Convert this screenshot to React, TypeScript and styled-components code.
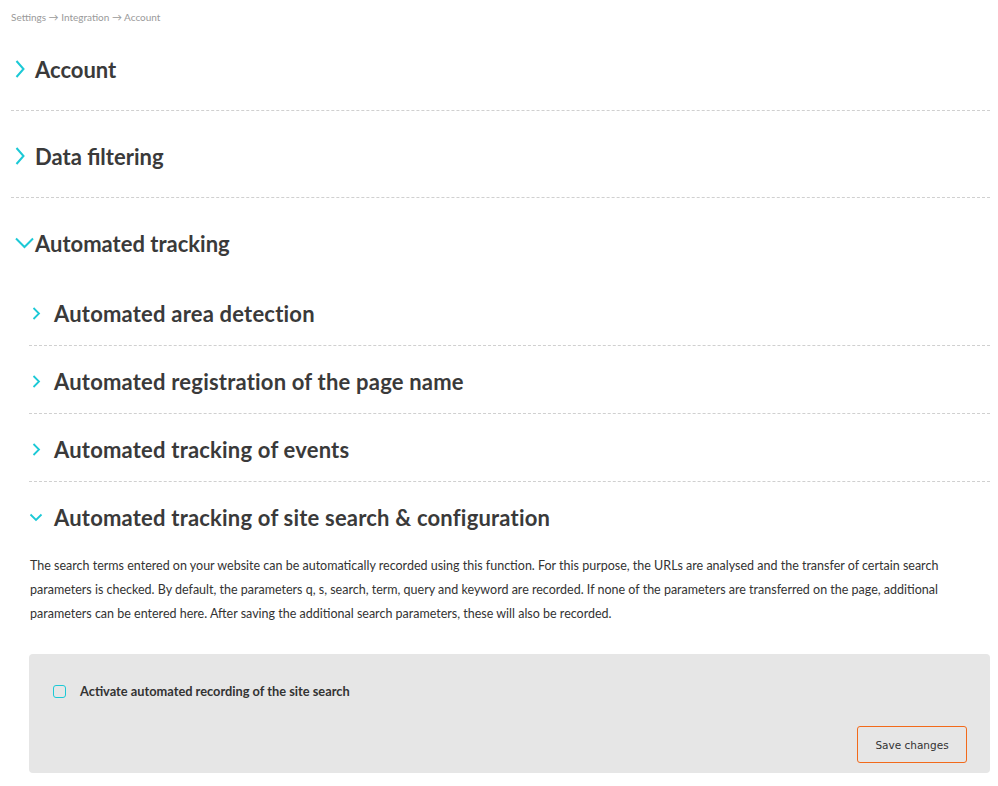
import { useState } from "react";
import styled, { createGlobalStyle, css } from "styled-components";

const GlobalStyle = createGlobalStyle`
  html, body {
    margin: 0;
    padding: 0;
    background: #ffffff;
    font-family: Lato, "Open Sans", sans-serif;
    color: #333333;
  }
`;

const Page = styled.div`
  padding: 10px 8px 12px 11px;
`;

const Breadcrumb = styled.div`
  font-size: 10px;
  color: #9a9a9a;
  line-height: 14px;
`;

const Section = styled.div<{ $last?: boolean }>`
  ${(p) =>
    !p.$last &&
    css`
      border-bottom: 1px dashed #d0d0d0;
    `}
`;

const Header = styled.div<{ $nested?: boolean }>`
  display: flex;
  align-items: center;
  cursor: pointer;
  ${(p) =>
    p.$nested
      ? css`
          height: 30px;
          padding: 20px 0 17px 0;
          gap: 14px;
          font-size: 22px;
          letter-spacing: 0.2px;
        `
      : css`
          height: 30px;
          padding: 30px 0 26px 0;
          font-size: 22px;
        `}
  font-weight: 700;
  color: #3a3a3a;
`;

const ChevronBox = styled.span<{ $nested?: boolean; $open?: boolean }>`
  display: inline-flex;
  align-items: center;
  justify-content: center;
  color: #1cc9d6;
  ${(p) =>
    p.$nested
      ? css`
          width: 14px;
          margin-left: 0;
          margin-right: -3px;
        `
      : p.$open
      ? css`
          width: 20px;
          margin-left: 3px;
          margin-right: 1px;
        `
      : css`
          width: 12px;
          margin-left: 3px;
          margin-right: 9px;
        `}
`;

const Nested = styled.div`
  margin-top: -6px;
  padding-left: 18px;
`;

const Description = styled.p`
  margin: 0 0 0 1px;
  padding: 5px 0 28px 0;
  font-size: 12.5px;
  line-height: 24px;
  color: #333333;
`;

const Panel = styled.div`
  background: #e6e6e6;
  border-radius: 4px;
  padding: 29px 23px 10px 24px;
  display: flex;
  flex-direction: column;
`;

const CheckRow = styled.label`
  display: flex;
  align-items: center;
  gap: 14px;
  font-size: 12.8px;
  font-weight: 700;
  color: #333333;
  cursor: pointer;
`;

const Box = styled.span<{ $checked: boolean }>`
  width: 11px;
  height: 11px;
  border: 1.5px solid #1cc9d6;
  border-radius: 3px;
  background: ${(p) => (p.$checked ? "#1cc9d6" : "transparent")};
`;

const Actions = styled.div`
  display: flex;
  justify-content: flex-end;
  margin-top: 27px;
`;

const SaveButton = styled.button`
  width: 110px;
  height: 37px;
  border: 1px solid #f26a1b;
  border-radius: 3px;
  background: transparent;
  font-family: "DejaVu Sans", Verdana, sans-serif;
  font-size: 10.5px;
  color: #333333;
  cursor: pointer;
`;

const Chevron = ({ open, nested }: { open: boolean; nested?: boolean }) => {
  if (nested) {
    return open ? (
      <svg width="14" height="9" viewBox="0 0 14 9">
        <path d="M1.5 1.5 L7 7 L12.5 1.5" fill="none" stroke="currentColor" strokeWidth="1.8" />
      </svg>
    ) : (
      <svg width="9" height="13" viewBox="0 0 9 13">
        <path d="M1.5 1 L7 6.5 L1.5 12" fill="none" stroke="currentColor" strokeWidth="1.8" />
      </svg>
    );
  }
  return open ? (
    <svg width="19" height="12" viewBox="0 0 19 12">
      <path d="M1 1.5 L9.5 10 L18 1.5" fill="none" stroke="currentColor" strokeWidth="2" />
    </svg>
  ) : (
    <svg width="10" height="18" viewBox="0 0 10 18">
      <path d="M1.5 1 L8.5 9 L1.5 17" fill="none" stroke="currentColor" strokeWidth="2" />
    </svg>
  );
};

const subSections = [
  "Automated area detection",
  "Automated registration of the page name",
  "Automated tracking of events",
  "Automated tracking of site search & configuration",
];

const App = () => {
  const [openTop, setOpenTop] = useState<string>("Automated tracking");
  const [openSub, setOpenSub] = useState<string>(subSections[3]);
  const [checked, setChecked] = useState(false);

  const topSections = ["Account", "Data filtering", "Automated tracking"];

  return (
    <Page>
      <GlobalStyle />
      <Breadcrumb>Settings → Integration → Account</Breadcrumb>
      {topSections.map((title, i) => {
        const open = openTop === title;
        return (
          <Section key={title} $last={i === topSections.length - 1}>
            <Header onClick={() => setOpenTop(open ? "" : title)}>
              <ChevronBox $open={open}>
                <Chevron open={open} />
              </ChevronBox>
              {title}
            </Header>
            {open && title === "Automated tracking" && (
              <Nested>
                {subSections.map((sub, j) => {
                  const subOpen = openSub === sub;
                  return (
                    <Section key={sub} $last={j === subSections.length - 1}>
                      <Header $nested onClick={() => setOpenSub(subOpen ? "" : sub)}>
                        <ChevronBox $nested>
                          <Chevron nested open={subOpen} />
                        </ChevronBox>
                        {sub}
                      </Header>
                      {subOpen && j === 3 && (
                        <>
                          <Description>
                            The search terms entered on your website can be automatically recorded
                            using this function. For this purpose, the URLs are analysed and the
                            transfer of certain search parameters is checked. By default, the
                            parameters q, s, search, term, query and keyword are recorded. If none
                            of the parameters are transferred on the page, additional parameters can
                            be entered here. After saving the additional search parameters, these
                            will also be recorded.
                          </Description>
                          <Panel>
                            <CheckRow onClick={() => setChecked(!checked)}>
                              <Box $checked={checked} />
                              Activate automated recording of the site search
                            </CheckRow>
                            <Actions>
                              <SaveButton>Save changes</SaveButton>
                            </Actions>
                          </Panel>
                        </>
                      )}
                    </Section>
                  );
                })}
              </Nested>
            )}
          </Section>
        );
      })}
    </Page>
  );
};

export default App;
